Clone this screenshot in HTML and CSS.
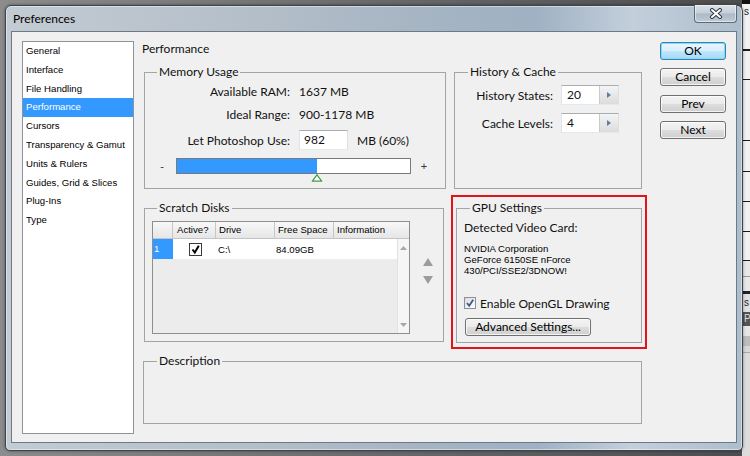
FILE: index.html
```html
<!DOCTYPE html>
<html>
<head>
<meta charset="utf-8">
<title>Preferences</title>
<link rel="stylesheet" href="styles.css">
</head>
<body>
<div class="desktop">
  <div class="bgwin"><span class="bg-s1">s</span><span class="bg-s2">s</span><span class="bg-p">P</span></div>
  <div class="window">
    <div class="titlebar">
      <span class="title">Preferences</span>
      <div class="close">
        <svg width="14" height="11" viewBox="0 0 14 11"><path d="M3 2 L11 9 M11 2 L3 9" stroke="#2e3843" stroke-width="4" stroke-linecap="round" fill="none"/><path d="M3 2 L11 9 M11 2 L3 9" stroke="#ffffff" stroke-width="2" stroke-linecap="round" fill="none"/></svg>
      </div>
    </div>
    <div class="content">
      <ul class="sidebar">
        <li>General</li>
        <li>Interface</li>
        <li>File Handling</li>
        <li class="sel">Performance</li>
        <li>Cursors</li>
        <li>Transparency &amp; Gamut</li>
        <li>Units &amp; Rulers</li>
        <li>Guides, Grid &amp; Slices</li>
        <li>Plug-Ins</li>
        <li>Type</li>
      </ul>
      <div class="main">
        <div class="heading">Performance</div>
        <div class="row row1">
          <fieldset class="group memory">
            <legend>Memory Usage</legend>
            <div class="kv r1"><span class="k">Available RAM:</span><span class="v">1637 MB</span></div>
            <div class="kv r2"><span class="k">Ideal Range:</span><span class="v">900-1178 MB</span></div>
            <div class="kv r3"><span class="k">Let Photoshop Use:</span><span class="field">982</span><span class="v">MB (60%)</span></div>
            <div class="slider-row">
              <span class="minus">-</span>
              <div class="track">
                <div class="fill" style="width:60%"></div>
                <svg class="thumb" width="11" height="8" viewBox="0 0 11 8"><polygon points="5.5,0.8 10.2,7.2 0.8,7.2" fill="#ffffff" stroke="#3f9a45" stroke-width="1.2"/></svg>
              </div>
              <span class="plus">+</span>
            </div>
          </fieldset>
          <fieldset class="group history">
            <legend>History &amp; Cache</legend>
            <div class="hrow h1"><span class="hk">History States:</span><div class="spin"><span class="val">20</span><span class="sbtn"><svg width="4" height="6" viewBox="0 0 4 6"><polygon points="0,0 4,3 0,6" fill="#5b7ea6"/></svg></span></div></div>
            <div class="hrow h2"><span class="hk">Cache Levels:</span><div class="spin"><span class="val">4</span><span class="sbtn"><svg width="4" height="6" viewBox="0 0 4 6"><polygon points="0,0 4,3 0,6" fill="#5b7ea6"/></svg></span></div></div>
          </fieldset>
        </div>
        <div class="row row2">
          <fieldset class="group scratch">
            <legend>Scratch Disks</legend>
            <div class="scratch-body">
              <div class="table">
                <div class="thead">
                  <div></div><div>Active?</div><div>Drive</div><div>Free Space</div><div>Information</div>
                </div>
                <div class="tbody">
                  <div class="rows">
                    <div class="trow">
                      <div class="num">1</div>
                      <div class="cbcell"><span class="cb"><svg width="11" height="11" viewBox="0 0 11 11"><path d="M2.5 5.5 L4.8 8.5 L8.8 1.8" stroke="#000" stroke-width="2" fill="none"/></svg></span></div>
                      <div class="drive">C:\</div>
                      <div class="free">84.09GB</div>
                      <div></div>
                    </div>
                  </div>
                  <div class="scroll">
                    <svg width="7" height="4" viewBox="0 0 7 4"><polygon points="3.5,0 7,4 0,4" fill="#a8a8a8"/></svg>
                    <svg width="7" height="4" viewBox="0 0 7 4"><polygon points="0,0 7,0 3.5,4" fill="#a8a8a8"/></svg>
                  </div>
                </div>
              </div>
              <div class="order">
                <svg width="10" height="8" viewBox="0 0 10 8"><polygon points="5,0 10,8 0,8" fill="#9c9c9c"/></svg>
                <svg width="10" height="8" viewBox="0 0 10 8"><polygon points="0,0 10,0 5,8" fill="#9c9c9c"/></svg>
              </div>
            </div>
          </fieldset>
          <div class="gpu-wrap">
            <fieldset class="group gpu">
              <legend>GPU Settings</legend>
              <div class="gpu-body">
                <div class="det">Detected Video Card:</div>
                <div class="card">NVIDIA Corporation<br>GeForce 6150SE nForce<br>430/PCI/SSE2/3DNOW!</div>
                <div class="ogl"><span class="cb2"><svg width="10" height="10" viewBox="0 0 10 10"><path d="M2 5 L4.2 7.8 L8.2 1.8" stroke="#3b5898" stroke-width="1.8" fill="none"/></svg></span><span>Enable OpenGL Drawing</span></div>
                <div class="btn adv">Advanced Settings...</div>
              </div>
            </fieldset>
          </div>
        </div>
        <fieldset class="group description">
          <legend>Description</legend>
        </fieldset>
      </div>
      <div class="buttons">
        <div class="btn default">OK</div>
        <div class="btn">Cancel</div>
        <div class="btn">Prev</div>
        <div class="btn">Next</div>
      </div>
    </div>
  </div>
</div>
</body>
</html>
```
FILE: styles.css
```css
* { box-sizing: border-box; }
html, body { margin: 0; padding: 0; }
body {
  width: 750px;
  height: 456px;
  overflow: hidden;
  font-family: Lato, "Liberation Sans", sans-serif;
  font-size: 12px;
  color: #111;
}
.desktop {
  position: relative;
  width: 750px;
  height: 456px;
  background: linear-gradient(90deg, #8c8c8c 0%, #6a6a6a 50%, #4c4c4c 100%);
}
.bgwin {
  position: absolute;
  left: 742px;
  top: 0;
  width: 8px;
  height: 456px;
  font-family: "Liberation Sans", sans-serif;
  font-size: 10px;
  background: linear-gradient(180deg,
    #111 0, #111 4px, #f2f2f2 4px, #f2f2f2 49px, #1a1a1a 49px, #1a1a1a 51px,
    #f2f2f2 51px, #f2f2f2 79px, #1a1a1a 79px, #1a1a1a 80px,
    #f2f2f2 80px, #f2f2f2 140px, #1a1a1a 140px, #1a1a1a 141px,
    #f2f2f2 141px, #f2f2f2 171px, #1a1a1a 171px, #1a1a1a 172px,
    #f2f2f2 172px, #f2f2f2 201px, #1a1a1a 201px, #1a1a1a 202px,
    #f2f2f2 202px, #f2f2f2 231px, #1a1a1a 231px, #1a1a1a 232px,
    #f2f2f2 232px, #f2f2f2 260px, #1a1a1a 260px, #1a1a1a 261px,
    #e8e8e8 261px, #e8e8e8 276px, #999 276px, #999 277px,
    #e8e8e8 277px, #e8e8e8 291px, #222 291px, #222 294px,
    #e0e0e0 294px, #e0e0e0 312px, #555 312px, #555 326px,
    #e6e6e6 326px, #e6e6e6 336px, #bdbdbd 336px, #bdbdbd 346px,
    #d8d8d8 346px, #d8d8d8 352px, #aaa 352px, #aaa 353px, #dcdcdc 353px);
}
.bg-s1, .bg-s2, .bg-p {
  position: absolute;
  left: 2px;
  line-height: 10px;
}
.bg-s1 { top: 7px; color: #222; }
.bg-s2 { top: 298px; color: #222; }
.bg-p { top: 314px; color: #ddd; }

.window {
  position: absolute;
  left: 5px;
  top: 5px;
  width: 738px;
  height: 446px;
  border: 1px solid #3a4550;
  border-radius: 6px 6px 5px 5px;
  padding: 0 5px 7px;
  display: flex;
  flex-direction: column;
  background: linear-gradient(90deg, #c3cbd3 0%, #b6c0ca 30%, #a7b5c3 55%, #9fb1c3 72%, #c3cfdb 85%, #aebdcc 100%);
  box-shadow: 0 0 3px rgba(0, 0, 0, 0.45), inset 0 0 0 1px rgba(255, 255, 255, 0.45);
}
.titlebar {
  height: 25px;
  display: flex;
  align-items: center;
}
.title {
  padding-left: 2px;
  font-size: 12px;
  color: #000;
  line-height: 14px;
}
.close {
  margin-left: auto;
  align-self: flex-start;
  margin-top: -1px;
  width: 43px;
  height: 18px;
  border: 1px solid #5d6976;
  border-top: none;
  border-radius: 0 0 4px 4px;
  background: linear-gradient(180deg, #dbe2e8 0%, #c4ced8 48%, #acb9c6 52%, #bfcbd6 100%);
  box-shadow: inset 0 0 0 1px rgba(255, 255, 255, 0.5);
  display: flex;
  align-items: center;
  justify-content: center;
}
.content {
  flex: 1;
  display: flex;
  align-items: flex-start;
  background: #f0f0f0;
  border: 1px solid #6c7987;
  padding: 9px 10px 0 10px;
}
.sidebar {
  width: 112px;
  height: 393px;
  margin: 0;
  padding: 0;
  list-style: none;
  background: #fff;
  border: 1px solid #8d939b;
  font-family: "Liberation Sans", sans-serif;
  font-size: 9.6px;
  color: #000;
}
.sidebar li {
  height: 18.8px;
  line-height: 18.8px;
  padding-left: 3px;
  white-space: nowrap;
}
.sidebar li.sel {
  background: #3399ff;
  color: #fff;
}
.main {
  width: 505px;
  margin-left: 8px;
  display: flex;
  flex-direction: column;
}
.heading {
  height: 15px;
  line-height: 15px;
  margin-bottom: 9px;
}
.row {
  display: flex;
  align-items: flex-start;
}
.group {
  margin: 0;
  padding: 0;
  min-width: 0;
  border: 1px solid #a4a4a4;
}
.group legend {
  padding: 0 2px;
  line-height: 14px;
  font-size: 12px;
  margin-left: 13px;
}
.row1 { margin-left: 2px; }
.memory { width: 302px; height: 124px; }
.memory legend { margin-left: 12px; }
.history { width: 188px; height: 124px; margin-left: 8px; }

.kv { display: flex; align-items: center; }
.r1 { height: 24px; }
.r2 { height: 23px; }
.r3 { height: 28px; }
.k { width: 145px; text-align: right; white-space: nowrap; }
.v { margin-left: 9px; white-space: nowrap; }
.field {
  width: 49px;
  height: 20px;
  margin-left: 9px;
  background: #fff;
  border: 1px solid #abadb3;
  border-color: #abadb3 #dbdfe6 #e3e9ef #e2e3ea;
  padding-left: 4px;
  line-height: 18px;
}
.slider-row {
  display: flex;
  align-items: center;
  margin-top: 4px;
  height: 16px;
}
.minus, .plus {
  width: 12px;
  text-align: center;
  font-family: "Liberation Sans", sans-serif;
  font-size: 11px;
  color: #333;
}
.minus { margin-left: 11px; }
.plus { margin-left: 7px; }
.track {
  position: relative;
  width: 235px;
  height: 16px;
  margin-left: 8px;
  border: 1px solid #7a7a7a;
  background: #fff;
}
.fill {
  height: 100%;
  background: #3399ff;
}
.thumb {
  position: absolute;
  left: 60%;
  top: 15px;
  transform: translateX(-50%);
}

.hrow { display: flex; align-items: center; height: 20px; }
.h1 { margin-top: 6px; }
.h2 { margin-top: 8px; }
.hk { width: 98px; text-align: right; white-space: nowrap; }
.spin {
  margin-left: 8px;
  width: 58px;
  height: 20px;
  display: flex;
  background: #fff;
  border: 1px solid #abadb3;
  border-color: #abadb3 #dbdfe6 #e3e9ef #e2e3ea;
}
.spin .val { flex: 1; padding-left: 5px; line-height: 18px; }
.sbtn {
  width: 19px;
  background: linear-gradient(180deg, #f4f4f4, #dcdcdc);
  border-left: 1px solid #cacaca;
  display: flex;
  align-items: center;
  justify-content: center;
}

.row2 { margin-top: 6px; }
.scratch { width: 300px; height: 141px; margin-left: 2px; margin-top: 6px; }
.scratch legend { margin-left: 12px; }
.scratch-body { display: flex; align-items: flex-start; }
.table {
  margin: 6px 0 0 7px;
  width: 258px;
  height: 113px;
  border: 1px solid #8e8e8e;
  background: #ececec;
  display: flex;
  flex-direction: column;
  font-family: "Liberation Sans", sans-serif;
  font-size: 9.6px;
  color: #000;
}
.thead {
  display: grid;
  grid-template-columns: 20px 43px 59px 59px 1fr;
  height: 17px;
  background: linear-gradient(180deg, #f8f8f8, #e6e6e6);
  border-bottom: 1px solid #c4c4c4;
}
.thead div {
  border-right: 1px solid #c6c6c6;
  padding-left: 3px;
  line-height: 16px;
  white-space: nowrap;
}
.thead div:nth-child(2) { padding-left: 4px; }
.thead div:last-child { border-right: none; }
.tbody { flex: 1; display: flex; }
.rows { flex: 1; }
.trow {
  display: grid;
  grid-template-columns: 20px 43px 59px 59px 1fr;
  height: 20px;
  background: #fff;
  align-items: center;
}
.num {
  height: 100%;
  background: #3399ff;
  color: #fff;
  padding-left: 1px;
  line-height: 20px;
}
.cbcell { display: flex; justify-content: center; }
.cb {
  width: 13px;
  height: 13px;
  border: 1px solid #3a3a3a;
  background: #fff;
  display: flex;
  align-items: center;
  justify-content: center;
  margin-left: 1px;
}
.drive { padding-left: 2px; }
.free { padding-left: 1px; }
.scroll {
  width: 12px;
  background: #f6f6f6;
  border-left: 1px solid #e2e2e2;
  display: flex;
  flex-direction: column;
  justify-content: space-between;
  align-items: center;
  padding: 7px 0 6px;
}
.order {
  margin-left: 13px;
  margin-top: 43px;
  display: flex;
  flex-direction: column;
  gap: 10px;
}

.gpu-wrap {
  margin-left: 7px;
  width: 196px;
  height: 154px;
  border: 2px solid #e3131c;
  padding: 4px 3px 0;
}
.gpu { width: 186px; height: 142px; }
.gpu-body { padding-left: 7px; }
.det { margin-top: 5px; line-height: 15px; }
.card {
  margin-top: 8px;
  font-family: "Liberation Sans", sans-serif;
  font-size: 9.6px;
  line-height: 11px;
  color: #000;
}
.ogl {
  margin-top: 20px;
  display: flex;
  align-items: center;
  height: 14px;
}
.cb2 {
  width: 12px;
  height: 12px;
  border: 1px solid #8e8f8f;
  background: linear-gradient(135deg, #dadbdc, #ffffff);
  margin-right: 4px;
  display: flex;
  align-items: center;
  justify-content: center;
}
.adv { margin-top: 8px; margin-left: 1px; width: 126px; }

.description { width: 499px; height: 70px; margin-left: 1px; margin-top: 5px; }

.buttons {
  margin-left: 13px;
  margin-top: 1px;
  width: 66px;
  display: flex;
  flex-direction: column;
  gap: 8.3px;
}
.btn {
  height: 18px;
  border: 1px solid #707070;
  border-radius: 3px;
  background: linear-gradient(180deg, #f3f3f3 0%, #ebebeb 48%, #dddddd 52%, #cfcfcf 100%);
  box-shadow: inset 0 0 0 1px rgba(255, 255, 255, 0.75);
  text-align: center;
  line-height: 16px;
  font-size: 12px;
  color: #000;
  white-space: nowrap;
}
.btn.default {
  border-color: #3c7fb1;
  background: linear-gradient(180deg, #eaf6fd 0%, #d9f0fc 48%, #bee6fd 52%, #a7d9f5 100%);
  box-shadow: inset 0 0 0 1px #7fdcf9;
}
```
